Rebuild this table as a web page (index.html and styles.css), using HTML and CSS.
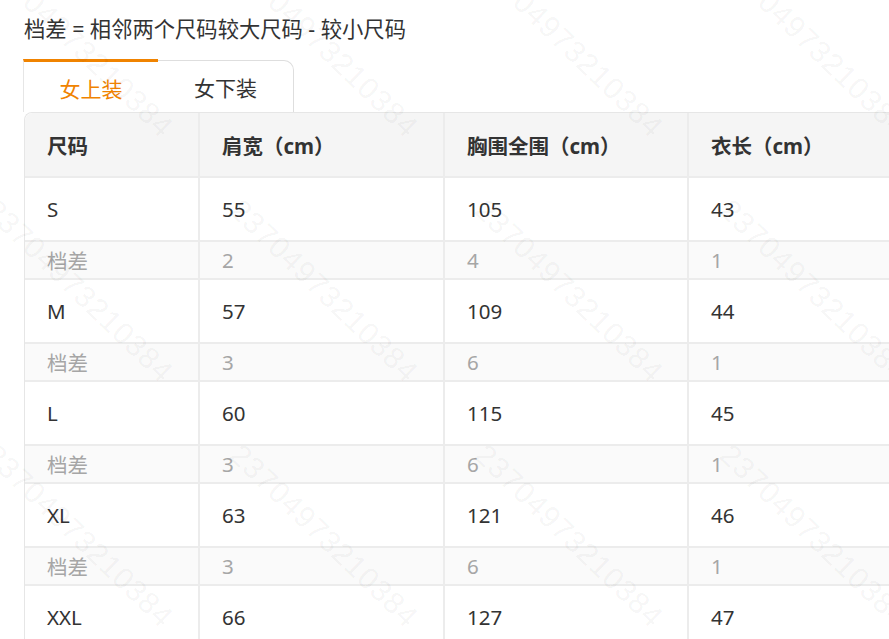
FILE: index.html
```html
<!DOCTYPE html>
<html lang="zh-CN">
<head>
<meta charset="utf-8">
<title>尺码表</title>
<link rel="stylesheet" href="styles.css">
</head>
<body>
<div class="page">
  <p class="note">档差 = 相邻两个尺码较大尺码 - 较小尺码</p>
  <div class="tabs">
    <div class="tab active">女上装</div>
    <div class="tab">女下装</div>
  </div>
  <table class="size-table">
    <colgroup>
      <col class="c1"><col class="c2"><col class="c3"><col class="c4">
    </colgroup>
    <thead>
      <tr><th>尺码</th><th>肩宽（cm）</th><th>胸围全围（cm）</th><th>衣长（cm）</th></tr>
    </thead>
    <tbody>
      <tr class="main"><td>S</td><td>55</td><td>105</td><td>43</td></tr>
      <tr class="diff"><td>档差</td><td>2</td><td>4</td><td>1</td></tr>
      <tr class="main"><td>M</td><td>57</td><td>109</td><td>44</td></tr>
      <tr class="diff"><td>档差</td><td>3</td><td>6</td><td>1</td></tr>
      <tr class="main"><td>L</td><td>60</td><td>115</td><td>45</td></tr>
      <tr class="diff"><td>档差</td><td>3</td><td>6</td><td>1</td></tr>
      <tr class="main"><td>XL</td><td>63</td><td>121</td><td>46</td></tr>
      <tr class="diff"><td>档差</td><td>3</td><td>6</td><td>1</td></tr>
      <tr class="main"><td>XXL</td><td>66</td><td>127</td><td>47</td></tr>
    </tbody>
  </table>
</div>
<div class="watermarks" aria-hidden="true">
  <span>23704973210384</span><span>23704973210384</span><span>23704973210384</span><span>23704973210384</span>
  <span>23704973210384</span><span>23704973210384</span><span>23704973210384</span><span>23704973210384</span>
  <span>23704973210384</span><span>23704973210384</span><span>23704973210384</span><span>23704973210384</span>
</div>
</body>
</html>
```
FILE: styles.css
```css
html, body {
  margin: 0;
  padding: 0;
  overflow: hidden;
  background: #fff;
}
body {
  font-family: "Noto Sans", "Noto Sans CJK SC", sans-serif;
  color: #333;
  width: 889px;
  height: 639px;
  position: relative;
}
.page {
  padding: 15px 0 0 24px;
}
.note {
  margin: 0;
  font-size: 21.3px;
  line-height: 28px;
  color: #333;
}
.tabs {
  display: flex;
  margin-top: 16px;
  margin-left: -1px;
  height: 53px;
}
.tab {
  box-sizing: border-box;
  height: 53px;
  display: flex;
  align-items: center;
  justify-content: center;
  font-size: 21px;
  color: #333;
  background: #fff;
}
.tab.active {
  width: 135px;
  color: #f08300;
  border-top: 3px solid #f08300;
  border-left: 1px solid #e6e6e6;
  padding-top: 1px;
}
.tab:not(.active) {
  width: 136px;
  margin-top: 1px;
  height: 52px;
  border: 1px solid #dedede;
  border-bottom: none;
  border-left: none;
  border-top-right-radius: 10px;
}
.size-table {
  border-collapse: separate;
  border-spacing: 0;
  table-layout: fixed;
  width: 909px;
  border-top: 1px solid #e6e6e6;
  border-left: 1px solid #e6e6e6;
  border-top-left-radius: 8px;
  font-size: 20.5px;
}
.c1 { width: 175px; }
.c2 { width: 245px; }
.c3 { width: 244px; }
.c4 { width: 245px; }
.size-table th,
.size-table td {
  text-align: left;
  padding: 0 0 0 22px;
  border-right: 2px solid #ececec;
  border-bottom: 2px solid #ececec;
  white-space: nowrap;
}
.size-table th {
  height: 63px;
  background: #f5f5f5;
  font-weight: 700;
  color: #333;
}
.size-table th:first-child {
  border-top-left-radius: 8px;
}
.main td {
  height: 62px;
  color: #333;
}
.diff td {
  height: 36px;
  background: #fafafa;
  color: #a6a6a6;
}
.watermarks {
  position: absolute;
  left: -10px;
  top: -55px;
  display: grid;
  grid-template-columns: repeat(4, 245px);
  grid-auto-rows: 245px;
  pointer-events: none;
}
.watermarks span {
  display: block;
  font-family: "Liberation Sans", sans-serif;
  font-size: 30px;
  letter-spacing: 1px;
  color: rgba(0, 0, 0, 0.05);
  transform-origin: 0 50%;
  transform: rotate(44deg);
  white-space: nowrap;
  line-height: 30px;
  height: 30px;
}
```
